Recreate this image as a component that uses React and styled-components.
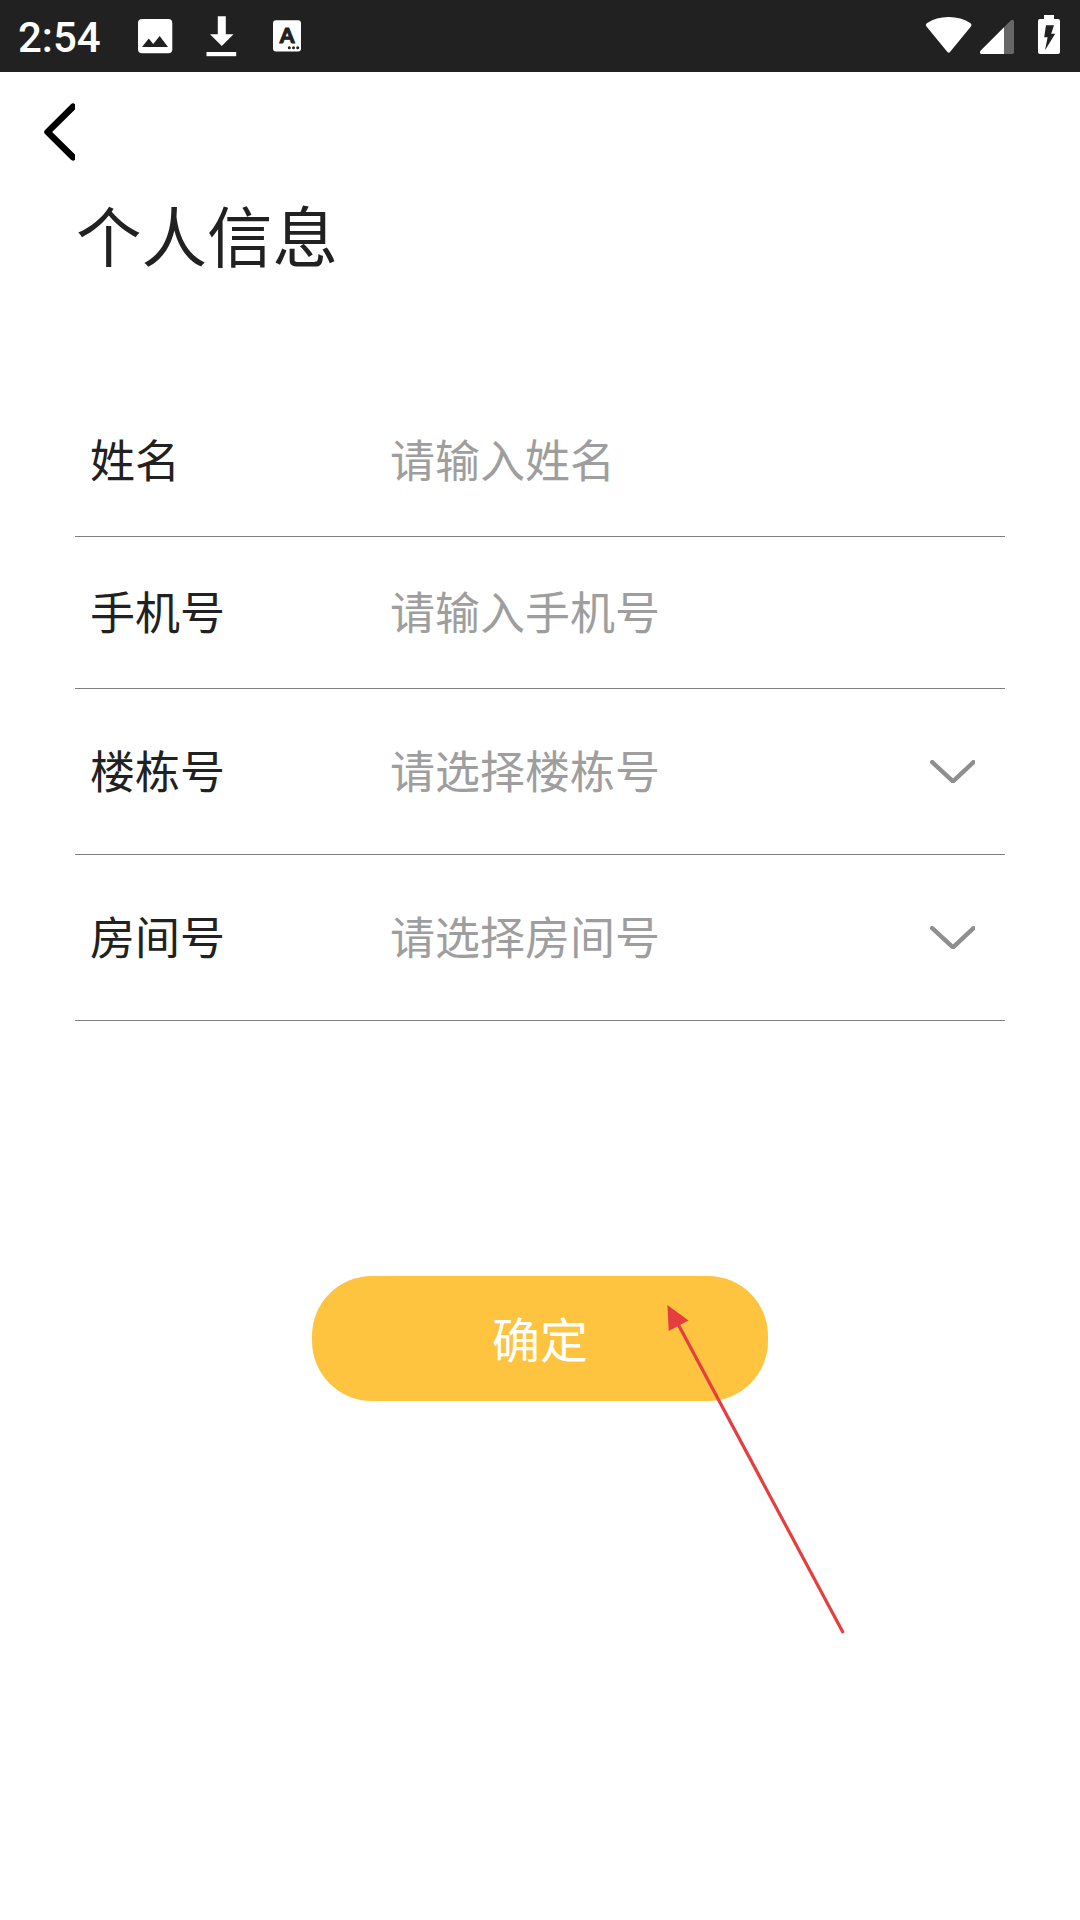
import React from 'react'
import styled, { createGlobalStyle } from 'styled-components'


const GlobalStyle = createGlobalStyle`
    * {
        box-sizing: border-box;
    }
    body {
        margin: 0;
        background: #fff;
        color: #212121;
        font-family: 'Noto Sans CJK SC', sans-serif;
    }
`
const Screen = styled.div`
    position: relative;
    display: flex;
    flex-direction: column;
    width: 1080px;
    height: 1920px;
    overflow: hidden;
    background: #fff;
`
const StatusBar = styled.header`
    display: flex;
    justify-content: space-between;
    flex: none;
    height: 72px;
    padding: 0 16px 0 18px;
    background: #212121;
`
const StatusGroup = styled.div`
    display: flex;
    align-items: center;
`
const Clock = styled.span`
    width: 108px;
    font-family: Roboto, sans-serif;
    font-size: 42px;
    font-weight: 500;
    line-height: 72px;
    color: #fff;
    padding-top: 4px;
`
const StatusIcon = styled.svg`
    display: block;
    height: 72px;
    width: ${props => props.$width}px;
`
const NavBar = styled.nav`
    display: flex;
    align-items: center;
    height: 120px;
    padding-left: 44px;
`
const BackButton = styled.button`
    width: 31px;
    height: 60px;
    padding: 0;
    border: 0;
    background: none;
    svg {
        display: block;
    }
`
const Title = styled.h1`
    margin: 0;
    padding-left: 76px;
    height: 193px;
    font-size: 65.5px;
    font-weight: 400;
    line-height: 83px;
`
const Form = styled.form`
    display: flex;
    flex-direction: column;
    padding: 0 75px;
`
const Row = styled.div`
    display: flex;
    align-items: center;
    height: ${props => props.$height}px;
    padding: 0 30px 0 15px;
    border-bottom: 1px solid #808080;
    font-size: 45px;
    line-height: 64px;
`
const Label = styled.label`
    width: 300px;
    padding-bottom: 3px;
`
const Value = styled.span`
    flex: 1;
    padding-bottom: 3px;
    color: #9e9e9e;
`
const Chevron = styled.svg`
    display: block;
    width: 45px;
    height: 23px;
`
const Submit = styled.button`
    align-self: center;
    width: 456px;
    height: 125px;
    margin-top: 255px;
    padding: 0 0 3px;
    border: 0;
    border-radius: 60px;
    background: #ffc43f;
    color: #fff;
    font-family: inherit;
    font-size: 48px;
    line-height: 122px;
`
// sits over the button and the blank area under it
const Pointer = styled.svg`
    position: absolute;
    left: 660px;
    top: 1300px;
    width: 190px;
    height: 340px;
    pointer-events: none;
`

const fields = [
    { label: '姓名', hint: '请输入姓名', height: 152 },
    { label: '手机号', hint: '请输入手机号', height: 152 },
    { label: '楼栋号', hint: '请选择楼栋号', height: 166, select: true },
    { label: '房间号', hint: '请选择房间号', height: 166, select: true },
]

function Status() {
    return (
        <StatusBar>
            <StatusGroup>
                <Clock>2:54</Clock>
                <StatusIcon $width={64} viewBox='126 0 64 72'>
                    <rect x='138' y='19' width='34.3' height='34.3' rx='4' fill='#fff' />
                    <path d='M142 47L148.8 38.5L153.2 44L159.7 36L168 47Z' fill='#212121' />
                </StatusIcon>
                <StatusIcon $width={64} viewBox='190 0 64 72' fill='#fff'>
                    <path d='M217.8 16.3H225.8V34.3H233.5L221.8 46L210 34.3H217.8Z' />
                    <rect x='206.5' y='52' width='29.7' height='4.2' />
                </StatusIcon>
                <StatusIcon $width={64} viewBox='254 0 64 72'>
                    <rect x='273' y='20.3' width='28' height='31.3' rx='3' fill='#fff' />
                    <text x='287' y='43.2' textAnchor='middle' fontFamily='Lato, sans-serif' fontWeight='900' fontSize='21' fill='#212121' stroke='#212121' strokeWidth='1'>A</text>
                    <circle cx='289.3' cy='47.7' r='1.5' fill='#212121' />
                    <circle cx='293.5' cy='47.7' r='1.5' fill='#212121' />
                    <circle cx='297.7' cy='47.7' r='1.5' fill='#212121' />
                </StatusIcon>
            </StatusGroup>
            <StatusGroup>
                <StatusIcon $width={56} viewBox='920 0 56 72'>
                    <path d='M926.3 26.2Q925.2 24.6 926.8 23.3Q936 17 948.7 17T970.6 23.3Q972.2 24.6 971.1 26.2L950 52Q948.7 53.6 947.4 52Z' fill='#fff' />
                </StatusIcon>
                <StatusIcon $width={48} viewBox='976 0 48 72'>
                    <path d='M1004 27.2L1010.8 20.5Q1011.6 19.8 1012.6 19.8Q1014 20 1014 21.5V52.2Q1014 54 1012.2 54H1004Z' fill='#676767' />
                    <path d='M1004 27.2V54H981.5Q980 54 980 52.5V51.2Z' fill='#fff' />
                </StatusIcon>
                <StatusIcon $width={40} viewBox='1024 0 40 72'>
                    <path d='M1044 15H1054V19H1058Q1060 19 1060 21V52Q1060 54 1058 54H1040Q1038 54 1038 52V21Q1038 19 1040 19H1044Z' fill='#fff' />
                    <path d='M1046 25.3H1054L1051.2 33.7H1055.2L1045 50.3L1047.6 37.3H1044.2Z' fill='#212121' />
                </StatusIcon>
            </StatusGroup>
        </StatusBar>
    )
}

function App() {
    return (
        <Screen>
            <GlobalStyle />
            <Status />
            <NavBar>
                <BackButton type='button' aria-label='返回'>
                    <svg width='31' height='60' viewBox='0 0 31 60' fill='none' stroke='#000' strokeWidth='6.6' strokeLinecap='round' strokeLinejoin='round'>
                        <path d='M29 4.8L3.6 30L29 55.2' />
                    </svg>
                </BackButton>
            </NavBar>
            <Title>个人信息</Title>
            <Form>
                {fields.map(field => (
                    <Row key={field.label} $height={field.height}>
                        <Label>{field.label}</Label>
                        <Value>{field.hint}</Value>
                        {field.select && (
                            <Chevron viewBox='0 0 45 23' fill='none' stroke='#8f8f8f' strokeWidth='4.4' strokeLinecap='round' strokeLinejoin='round'>
                                <path d='M2.2 2.2L23 21.3L43.5 2.2' />
                            </Chevron>
                        )}
                    </Row>
                ))}
                <Submit type='button'>确定</Submit>
            </Form>
            <Pointer viewBox='660 1300 190 340'>
                <path d='M678 1324L843.3 1633' stroke='#e53e3e' strokeWidth='3.2' />
                <path d='M667.4 1305L688.6 1320.4L668.7 1331Z' fill='#e53e3e' />
            </Pointer>
        </Screen>
    )
}

export default App
